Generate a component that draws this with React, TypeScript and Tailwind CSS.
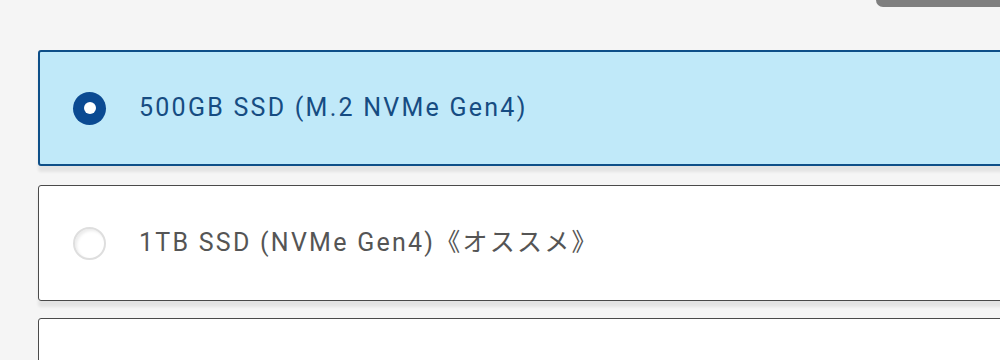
import React from "react";

const font = { fontFamily: "Roboto, 'Noto Sans CJK JP', sans-serif" };

export default function App() {
  return (
    <div className="relative w-[1000px] h-[360px] overflow-hidden bg-[#f5f5f5]" style={font}>
      <div className="absolute right-0 top-0 w-[124px] h-[7px] bg-[#7f7f7f] rounded-bl-[7px]" />
      <div className="pt-[50px] pl-[38px] w-[1100px] flex flex-col">
        <div className="h-[116px] border-2 border-[#0e4f88] rounded-[3px] bg-[#c0e9f9] shadow-[0_6px_3px_rgba(0,0,0,0.07)] flex items-center pl-[33px]">
          <div className="w-[33px] h-[33px] rounded-full bg-[#0b4a92] flex items-center justify-center">
            <div className="w-[12px] h-[12px] rounded-full bg-white" />
          </div>
          <span className="ml-[33px] text-[25px] tracking-[2.25px] text-[#164c82]">500GB SSD (M.2 NVMe Gen4)</span>
        </div>
        <div className="mt-[19px] h-[116px] border border-[#4a4a4a] rounded-[3px] bg-white shadow-[0_6px_3px_rgba(0,0,0,0.07)] flex items-center pl-[34px]">
          <div className="w-[33px] h-[33px] rounded-full bg-white border-2 border-[#dedede] shadow-[inset_2px_2px_3px_rgba(0,0,0,0.08)]" />
          <span className="ml-[33px] text-[25px] tracking-[2.25px] text-[#555555]">1TB SSD (NVMe Gen4)《オススメ》</span>
        </div>
        <div className="mt-[17px] h-[116px] border border-[#4a4a4a] rounded-[3px] bg-white" />
      </div>
    </div>
  );
}
